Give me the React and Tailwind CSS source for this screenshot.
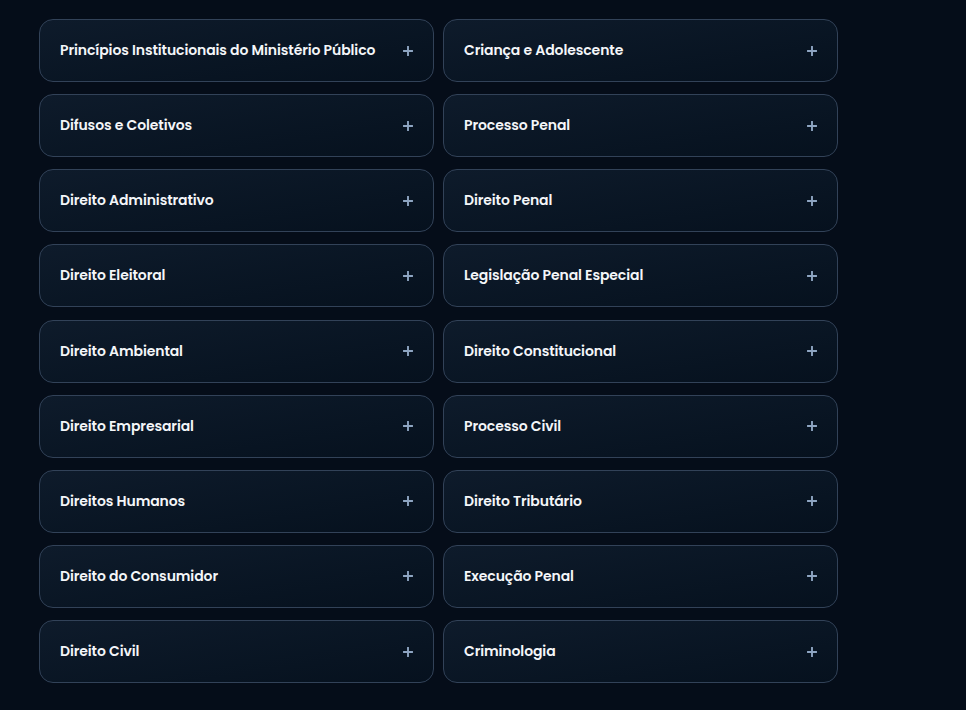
import React from 'react';

const topics = [
  'Princípios Institucionais do Ministério Público',
  'Criança e Adolescente',
  'Difusos e Coletivos',
  'Processo Penal',
  'Direito Administrativo',
  'Direito Penal',
  'Direito Eleitoral',
  'Legislação Penal Especial',
  'Direito Ambiental',
  'Direito Constitucional',
  'Direito Empresarial',
  'Processo Civil',
  'Direitos Humanos',
  'Direito Tributário',
  'Direito do Consumidor',
  'Execução Penal',
  'Direito Civil',
  'Criminologia',
];

function PlusIcon() {
  return (
    <svg width="10" height="10" viewBox="0 0 10 10" fill="none" className="shrink-0">
      <path d="M5 0.5v9M0.5 5h9" stroke="#8ea5c2" strokeWidth="1.9" strokeLinecap="round" />
    </svg>
  );
}

function TopicCard({ title }) {
  return (
    <button className="flex h-[63px] w-full items-center justify-between rounded-[14px] border border-[#324258] bg-gradient-to-br from-[#0e1b2b] to-[#06111e] pl-5 pr-5 text-left">
      <span className="text-[14px] font-semibold tracking-[-0.1px] text-[#f4f6f9]">{title}</span>
      <PlusIcon />
    </button>
  );
}

export default function App() {
  return (
    <div
      className="min-h-[710px] w-full bg-[#050d19] pl-[39px] pt-[19px]"
      style={{ fontFamily: 'Poppins, Inter, "Noto Sans", sans-serif' }}
    >
      <div className="grid w-[799px] grid-cols-2 gap-x-[9px] gap-y-[12.125px]">
        {topics.map((t) => (
          <TopicCard key={t} title={t} />
        ))}
      </div>
    </div>
  );
}
